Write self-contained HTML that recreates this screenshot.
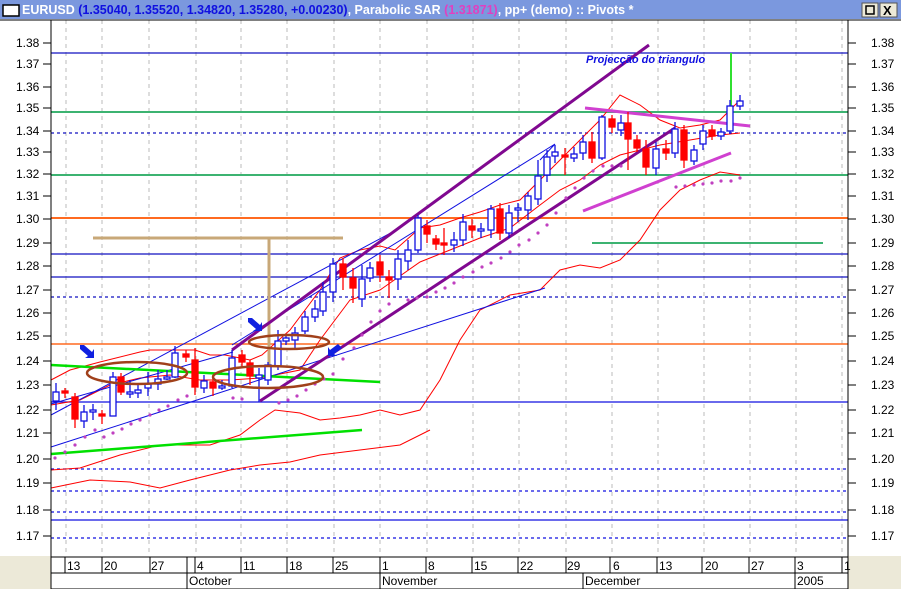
<!DOCTYPE html>
<html><head><meta charset="utf-8"><style>
html,body{margin:0;padding:0;background:#fff;}
svg{display:block;font-family:"Liberation Sans",sans-serif;}
</style></head><body>
<svg width="901" height="589" viewBox="0 0 901 589" xmlns="http://www.w3.org/2000/svg">
<rect x="0" y="0" width="901" height="589" fill="#fff"/>
<!-- title bar -->
<rect x="0" y="0" width="901" height="19" fill="#7b98de"/>
<rect x="3" y="5" width="16" height="11" fill="#fff" stroke="#000" stroke-width="1.5"/>
<text x="22" y="14" font-size="12.5" font-weight="bold" fill="#fff">EURUSD <tspan fill="#1010e0">(1.35040, 1.35520, 1.34820, 1.35280, +0.00230)</tspan>, Parabolic SAR <tspan fill="#e040c0">(1.31871)</tspan>, pp+ (demo) :: Pivots *</text>
<rect x="862" y="3" width="16" height="14" fill="#ece9d8" stroke="#555"/>
<rect x="866" y="6" width="8" height="8" fill="none" stroke="#000" stroke-width="1.5"/>
<rect x="880" y="3" width="17" height="14" fill="#ece9d8" stroke="#555"/>
<text x="883" y="15" font-size="13" font-weight="bold">X</text>
<!-- bottom grey corners -->
<rect x="0" y="556" width="51" height="33" fill="#ece9d8"/>
<rect x="848" y="556" width="53" height="33" fill="#ece9d8"/>
<!-- vertical grid -->
<g stroke="#bbb" stroke-dasharray="4,4" stroke-width="1">
<line x1="66" y1="20" x2="66" y2="556"/><line x1="102" y1="20" x2="102" y2="556"/><line x1="149" y1="20" x2="149" y2="556"/><line x1="196" y1="20" x2="196" y2="556"/><line x1="241" y1="20" x2="241" y2="556"/><line x1="287" y1="20" x2="287" y2="556"/><line x1="334" y1="20" x2="334" y2="556"/><line x1="380" y1="20" x2="380" y2="556"/><line x1="427" y1="20" x2="427" y2="556"/><line x1="473" y1="20" x2="473" y2="556"/><line x1="519" y1="20" x2="519" y2="556"/><line x1="566" y1="20" x2="566" y2="556"/><line x1="612" y1="20" x2="612" y2="556"/><line x1="658" y1="20" x2="658" y2="556"/><line x1="704" y1="20" x2="704" y2="556"/><line x1="750" y1="20" x2="750" y2="556"/><line x1="796" y1="20" x2="796" y2="556"/><line x1="842" y1="20" x2="842" y2="556"/>
</g>
<!-- horizontal lines -->
<g stroke-width="1.3">
<line x1="51" y1="53" x2="848" y2="53" stroke="#1010c0"/>
<line x1="51" y1="133" x2="848" y2="133" stroke="#1010c0" stroke-dasharray="3,3"/>
<line x1="51" y1="254" x2="848" y2="254" stroke="#1010c0"/>
<line x1="51" y1="277" x2="848" y2="277" stroke="#1010c0"/>
<line x1="51" y1="297" x2="848" y2="297" stroke="#1010c0" stroke-dasharray="3,3"/>
<line x1="51" y1="402" x2="848" y2="402" stroke="#1010e0"/>
<line x1="51" y1="469" x2="848" y2="469" stroke="#1010e0" stroke-dasharray="3,3"/>
<line x1="51" y1="491" x2="848" y2="491" stroke="#1010e0" stroke-dasharray="3,3"/>
<line x1="51" y1="512" x2="848" y2="512" stroke="#1010e0" stroke-dasharray="3,3"/>
<line x1="51" y1="520" x2="848" y2="520" stroke="#1010e0"/>
<line x1="51" y1="538" x2="848" y2="538" stroke="#1010e0" stroke-dasharray="3,3"/>
</g>
<line x1="51" y1="112" x2="848" y2="112" stroke="#3cb371" stroke-width="2"/>
<line x1="51" y1="175" x2="848" y2="175" stroke="#3cb371" stroke-width="2"/>
<line x1="51" y1="218" x2="848" y2="218" stroke="#ff6a20" stroke-width="2"/>
<line x1="51" y1="344" x2="848" y2="344" stroke="#ff6a20" stroke-width="1.5"/>
<line x1="592" y1="243" x2="823" y2="243" stroke="#3cb371" stroke-width="2"/>
<line x1="731" y1="53" x2="731" y2="123" stroke="#30e030" stroke-width="2"/>
<!-- bollinger -->
<g fill="none" stroke="#ff0000" stroke-width="1">
<polyline points="51,380 70,370 100,362 140,352 150,350 175,350 195,350 210,355 225,355 250,360 262,355 290,330 320,290 340,258 360,250 380,246 395,250 420,228 440,225 460,218 480,212 500,205 520,200 545,175 570,150 600,120 620,95 640,105 660,120 680,128 700,125 720,120 740,100"/>
<polyline points="51,405 80,400 110,385 140,378 170,375 200,380 230,380 260,378 300,370 320,340 350,300 380,290 420,262 450,250 480,238 510,228 540,205 560,190 580,180 600,165 620,155 640,150 660,145 690,140 720,135 740,133"/>
<polyline points="51,470 80,468 120,455 160,445 190,445 210,445 240,435 260,420 275,410 300,413 320,420 340,418 360,415 380,410 400,415 420,410 440,380 460,340 480,310 510,295 540,290 560,270 580,265 600,268 620,260 640,240 660,210 680,190 700,180 720,172 740,175"/>
<polyline points="51,488 90,480 130,482 160,488 190,480 230,470 260,465 290,462 320,455 360,450 400,445 430,430"/>
</g>
<!-- blue trend lines -->
<g fill="none" stroke="#1010e0" stroke-width="1">
<line x1="51" y1="415" x2="400" y2="228"/>
<line x1="51" y1="447" x2="545" y2="288"/>
<polyline points="232,345 555,144 540,160"/>
<line x1="51" y1="404" x2="233" y2="352"/>
</g>
<!-- green lines -->
<line x1="51" y1="365" x2="380" y2="382" stroke="#00e000" stroke-width="2.5"/>
<line x1="51" y1="454" x2="362" y2="430" stroke="#00e000" stroke-width="2.5"/>
<!-- tan -->
<line x1="93" y1="238" x2="343" y2="238" stroke="#c8a878" stroke-width="3"/>
<line x1="269" y1="238" x2="269" y2="378" stroke="#c8a878" stroke-width="3"/>
<!-- purple channel -->
<line x1="232" y1="350" x2="649" y2="45" stroke="#800890" stroke-width="3"/>
<line x1="260" y1="401" x2="675" y2="128" stroke="#800890" stroke-width="3"/>
<!-- magenta triangle -->
<line x1="585" y1="108" x2="750" y2="126" stroke="#d040d0" stroke-width="3"/>
<line x1="583" y1="211" x2="731" y2="153" stroke="#d040d0" stroke-width="3"/>
<!-- SAR dots -->
<g fill="#c040c0">
<circle cx="55" cy="458" r="1.6"/><circle cx="65" cy="452" r="1.6"/><circle cx="75" cy="445" r="1.6"/><circle cx="85" cy="437" r="1.6"/><circle cx="95" cy="430" r="1.6"/><circle cx="104" cy="437" r="1.6"/><circle cx="113" cy="433" r="1.6"/><circle cx="122" cy="429" r="1.6"/><circle cx="131" cy="424" r="1.6"/><circle cx="140" cy="420" r="1.6"/><circle cx="150" cy="415" r="1.6"/><circle cx="159" cy="410" r="1.6"/><circle cx="168" cy="406" r="1.6"/><circle cx="178" cy="400" r="1.6"/><circle cx="187" cy="396" r="1.6"/><circle cx="233" cy="398" r="1.6"/><circle cx="242" cy="399" r="1.6"/><circle cx="279" cy="403" r="1.6"/><circle cx="288" cy="400" r="1.6"/><circle cx="297" cy="396" r="1.6"/><circle cx="306" cy="390" r="1.6"/><circle cx="315" cy="384" r="1.6"/><circle cx="324" cy="379" r="1.6"/><circle cx="333" cy="374" r="1.6"/><circle cx="343" cy="359" r="1.6"/><circle cx="354" cy="348" r="1.6"/><circle cx="362" cy="335" r="1.6"/><circle cx="371" cy="322" r="1.6"/><circle cx="380" cy="311" r="1.6"/><circle cx="389" cy="304" r="1.6"/><circle cx="408" cy="300" r="1.6"/><circle cx="417" cy="298" r="1.6"/><circle cx="427" cy="297" r="1.6"/><circle cx="436" cy="292" r="1.6"/><circle cx="445" cy="288" r="1.6"/><circle cx="454" cy="283" r="1.6"/><circle cx="463" cy="277" r="1.6"/><circle cx="473" cy="272" r="1.6"/><circle cx="482" cy="267" r="1.6"/><circle cx="491" cy="263" r="1.6"/><circle cx="501" cy="258" r="1.6"/><circle cx="510" cy="252" r="1.6"/><circle cx="519" cy="245" r="1.6"/><circle cx="529" cy="240" r="1.6"/><circle cx="538" cy="233" r="1.6"/><circle cx="547" cy="225" r="1.6"/><circle cx="556" cy="213" r="1.6"/><circle cx="566" cy="198" r="1.6"/><circle cx="575" cy="188" r="1.6"/><circle cx="584" cy="178" r="1.6"/><circle cx="593" cy="171" r="1.6"/><circle cx="603" cy="166" r="1.6"/><circle cx="612" cy="166" r="1.6"/><circle cx="621" cy="166" r="1.6"/><circle cx="676" cy="187" r="1.6"/><circle cx="685" cy="186" r="1.6"/><circle cx="694" cy="185" r="1.6"/><circle cx="703" cy="184" r="1.6"/><circle cx="712" cy="183" r="1.6"/><circle cx="721" cy="181" r="1.6"/><circle cx="731" cy="181" r="1.6"/><circle cx="740" cy="178" r="1.6"/>
</g>
<!-- candles -->
<g stroke-width="1.3">
<g stroke="#1010e0" fill="#fff">
<line x1="56" y1="383" x2="56" y2="410"/><rect x="53" y="392" width="6" height="9"/>
<line x1="84" y1="405" x2="84" y2="428"/><rect x="81" y="412" width="6" height="9"/>
<line x1="93" y1="404" x2="93" y2="420"/><rect x="90" y="410" width="6" height="2"/>
<line x1="113" y1="372" x2="113" y2="416"/><rect x="110" y="377" width="6" height="39"/>
<line x1="130" y1="380" x2="130" y2="398"/><rect x="127" y="392" width="6" height="2"/>
<line x1="138" y1="383" x2="138" y2="398"/><rect x="135" y="390" width="6" height="3"/>
<line x1="148" y1="372" x2="148" y2="396"/><rect x="145" y="384" width="6" height="4"/>
<line x1="158" y1="370" x2="158" y2="390"/><rect x="155" y="379" width="6" height="5"/>
<line x1="167" y1="370" x2="167" y2="380"/><rect x="164" y="377" width="6" height="2"/>
<line x1="175" y1="346" x2="175" y2="378"/><rect x="172" y="353" width="6" height="24"/>
<line x1="204" y1="375" x2="204" y2="393"/><rect x="201" y="381" width="6" height="7"/>
<line x1="222" y1="380" x2="222" y2="390"/><rect x="219" y="386" width="6" height="2"/>
<line x1="232" y1="350" x2="232" y2="388"/><rect x="229" y="358" width="6" height="28"/>
<line x1="259" y1="368" x2="259" y2="402"/><rect x="256" y="375" width="6" height="3"/>
<line x1="268" y1="362" x2="268" y2="385"/><rect x="265" y="365" width="6" height="15"/>
<line x1="278" y1="330" x2="278" y2="370"/><rect x="275" y="341" width="6" height="25"/>
<line x1="286" y1="335" x2="286" y2="345"/><rect x="283" y="338" width="6" height="3"/>
<line x1="295" y1="327" x2="295" y2="348"/><rect x="292" y="333" width="6" height="7"/>
<line x1="305" y1="311" x2="305" y2="334"/><rect x="302" y="317" width="6" height="14"/>
<line x1="315" y1="300" x2="315" y2="322"/><rect x="312" y="309" width="6" height="8"/>
<line x1="323" y1="282" x2="323" y2="316"/><rect x="320" y="292" width="6" height="19"/>
<line x1="333" y1="258" x2="333" y2="302"/><rect x="330" y="264" width="6" height="28"/>
<line x1="362" y1="265" x2="362" y2="307"/><rect x="359" y="279" width="6" height="20"/>
<line x1="370" y1="262" x2="370" y2="282"/><rect x="367" y="268" width="6" height="10"/>
<line x1="398" y1="250" x2="398" y2="290"/><rect x="395" y="259" width="6" height="20"/>
<line x1="408" y1="240" x2="408" y2="270"/><rect x="405" y="250" width="6" height="11"/>
<line x1="418" y1="215" x2="418" y2="253"/><rect x="415" y="218" width="6" height="32"/>
<line x1="454" y1="232" x2="454" y2="252"/><rect x="451" y="240" width="6" height="5"/>
<line x1="463" y1="214" x2="463" y2="246"/><rect x="460" y="222" width="6" height="18"/>
<line x1="481" y1="223" x2="481" y2="238"/><rect x="478" y="229" width="6" height="2"/>
<line x1="491" y1="205" x2="491" y2="238"/><rect x="488" y="209" width="6" height="21"/>
<line x1="509" y1="205" x2="509" y2="238"/><rect x="506" y="213" width="6" height="20"/>
<line x1="518" y1="203" x2="518" y2="222"/><rect x="515" y="208" width="6" height="2"/>
<line x1="528" y1="192" x2="528" y2="220"/><rect x="525" y="196" width="6" height="14"/>
<line x1="538" y1="160" x2="538" y2="205"/><rect x="535" y="176" width="6" height="23"/>
<line x1="547" y1="150" x2="547" y2="182"/><rect x="544" y="157" width="6" height="18"/>
<line x1="555" y1="145" x2="555" y2="163"/><rect x="552" y="152" width="6" height="4"/>
<line x1="574" y1="147" x2="574" y2="162"/><rect x="571" y="154" width="6" height="4"/>
<line x1="583" y1="135" x2="583" y2="160"/><rect x="580" y="142" width="6" height="11"/>
<line x1="602" y1="115" x2="602" y2="160"/><rect x="599" y="117" width="6" height="41"/>
<line x1="621" y1="115" x2="621" y2="136"/><rect x="618" y="123" width="6" height="7"/>
<line x1="656" y1="142" x2="656" y2="175"/><rect x="653" y="149" width="6" height="19"/>
<line x1="675" y1="122" x2="675" y2="158"/><rect x="672" y="129" width="6" height="24"/>
<line x1="694" y1="145" x2="694" y2="165"/><rect x="691" y="150" width="6" height="11"/>
<line x1="703" y1="125" x2="703" y2="150"/><rect x="700" y="131" width="6" height="13"/>
<line x1="721" y1="128" x2="721" y2="140"/><rect x="718" y="132" width="6" height="4"/>
<line x1="730" y1="100" x2="730" y2="134"/><rect x="727" y="106" width="6" height="25"/>
<line x1="740" y1="95" x2="740" y2="110"/><rect x="737" y="101" width="6" height="5"/>
</g>
<g stroke="#ff0000" fill="#ff0000">
<line x1="65" y1="388" x2="65" y2="398"/><rect x="62" y="391" width="6" height="2"/>
<line x1="75" y1="393" x2="75" y2="428"/><rect x="72" y="397" width="6" height="22"/>
<line x1="102" y1="410" x2="102" y2="424"/><rect x="99" y="414" width="6" height="2"/>
<line x1="121" y1="373" x2="121" y2="395"/><rect x="118" y="377" width="6" height="15"/>
<line x1="186" y1="350" x2="186" y2="362"/><rect x="183" y="354" width="6" height="3"/>
<line x1="195" y1="348" x2="195" y2="395"/><rect x="192" y="360" width="6" height="27"/>
<line x1="213" y1="375" x2="213" y2="396"/><rect x="210" y="382" width="6" height="6"/>
<line x1="242" y1="350" x2="242" y2="368"/><rect x="239" y="355" width="6" height="7"/>
<line x1="250" y1="360" x2="250" y2="385"/><rect x="247" y="363" width="6" height="13"/>
<line x1="343" y1="258" x2="343" y2="290"/><rect x="340" y="264" width="6" height="13"/>
<line x1="353" y1="268" x2="353" y2="303"/><rect x="350" y="278" width="6" height="10"/>
<line x1="380" y1="255" x2="380" y2="282"/><rect x="377" y="262" width="6" height="13"/>
<line x1="389" y1="270" x2="389" y2="298"/><rect x="386" y="277" width="6" height="3"/>
<line x1="427" y1="220" x2="427" y2="243"/><rect x="424" y="226" width="6" height="8"/>
<line x1="436" y1="235" x2="436" y2="250"/><rect x="433" y="239" width="6" height="5"/>
<line x1="444" y1="228" x2="444" y2="255"/><rect x="441" y="243" width="6" height="2"/>
<line x1="472" y1="219" x2="472" y2="238"/><rect x="469" y="226" width="6" height="4"/>
<line x1="500" y1="203" x2="500" y2="240"/><rect x="497" y="209" width="6" height="24"/>
<line x1="565" y1="148" x2="565" y2="175"/><rect x="562" y="155" width="6" height="2"/>
<line x1="592" y1="132" x2="592" y2="163"/><rect x="589" y="142" width="6" height="16"/>
<line x1="612" y1="115" x2="612" y2="133"/><rect x="609" y="119" width="6" height="8"/>
<line x1="628" y1="112" x2="628" y2="170"/><rect x="625" y="123" width="6" height="16"/>
<line x1="637" y1="135" x2="637" y2="152"/><rect x="634" y="140" width="6" height="8"/>
<line x1="646" y1="140" x2="646" y2="175"/><rect x="643" y="149" width="6" height="18"/>
<line x1="666" y1="140" x2="666" y2="160"/><rect x="663" y="149" width="6" height="4"/>
<line x1="684" y1="125" x2="684" y2="168"/><rect x="681" y="130" width="6" height="30"/>
<line x1="712" y1="125" x2="712" y2="140"/><rect x="709" y="130" width="6" height="6"/>
</g>
</g>
<!-- ellipses -->
<g fill="none" stroke="#a0401a" stroke-width="2.5">
<ellipse cx="137" cy="373" rx="50" ry="11"/>
<ellipse cx="268" cy="377" rx="55" ry="11"/>
<ellipse cx="289" cy="342" rx="40" ry="7"/>
</g>
<!-- arrows -->
<g fill="#1020e0">
<polygon points="80,345 84,345 92,352 94,349 94,358 85,358 88,356 80,349"/>
<polygon points="248,318 252,318 260,325 262,322 262,331 253,331 256,329 248,322"/>
<polygon points="338,344 342,348 334,354 337,356 328,356 328,347 330,350"/>
</g>
<text x="586" y="63" font-size="11" font-weight="bold" font-style="italic" fill="#1010e0">Projecção do triangulo</text>
<!-- axes -->
<line x1="51" y1="20" x2="51" y2="557" stroke="#000"/>
<line x1="848" y1="20" x2="848" y2="557" stroke="#000"/>
<line x1="0" y1="20" x2="901" y2="20" stroke="#000"/>
<g font-size="12" fill="#000" stroke="#000">
<g stroke-width="1">
<line x1="43" y1="43" x2="51" y2="43"/><line x1="43" y1="64" x2="51" y2="64"/><line x1="43" y1="87" x2="51" y2="87"/><line x1="43" y1="108" x2="51" y2="108"/><line x1="43" y1="131" x2="51" y2="131"/><line x1="43" y1="152" x2="51" y2="152"/><line x1="43" y1="174" x2="51" y2="174"/><line x1="43" y1="196" x2="51" y2="196"/><line x1="43" y1="219" x2="51" y2="219"/><line x1="43" y1="243" x2="51" y2="243"/><line x1="43" y1="266" x2="51" y2="266"/><line x1="43" y1="290" x2="51" y2="290"/><line x1="43" y1="313" x2="51" y2="313"/><line x1="43" y1="336" x2="51" y2="336"/><line x1="43" y1="361" x2="51" y2="361"/><line x1="43" y1="385" x2="51" y2="385"/><line x1="43" y1="410" x2="51" y2="410"/><line x1="43" y1="433" x2="51" y2="433"/><line x1="43" y1="459" x2="51" y2="459"/><line x1="43" y1="483" x2="51" y2="483"/><line x1="43" y1="510" x2="51" y2="510"/><line x1="43" y1="536" x2="51" y2="536"/>
<line x1="848" y1="43" x2="856" y2="43"/><line x1="848" y1="64" x2="856" y2="64"/><line x1="848" y1="87" x2="856" y2="87"/><line x1="848" y1="108" x2="856" y2="108"/><line x1="848" y1="131" x2="856" y2="131"/><line x1="848" y1="152" x2="856" y2="152"/><line x1="848" y1="174" x2="856" y2="174"/><line x1="848" y1="196" x2="856" y2="196"/><line x1="848" y1="219" x2="856" y2="219"/><line x1="848" y1="243" x2="856" y2="243"/><line x1="848" y1="266" x2="856" y2="266"/><line x1="848" y1="290" x2="856" y2="290"/><line x1="848" y1="313" x2="856" y2="313"/><line x1="848" y1="336" x2="856" y2="336"/><line x1="848" y1="361" x2="856" y2="361"/><line x1="848" y1="385" x2="856" y2="385"/><line x1="848" y1="410" x2="856" y2="410"/><line x1="848" y1="433" x2="856" y2="433"/><line x1="848" y1="459" x2="856" y2="459"/><line x1="848" y1="483" x2="856" y2="483"/><line x1="848" y1="510" x2="856" y2="510"/><line x1="848" y1="536" x2="856" y2="536"/>
</g>
<g stroke="none">
<text x="16" y="47">1.38</text><text x="16" y="68">1.37</text><text x="16" y="91">1.36</text><text x="16" y="112">1.35</text><text x="16" y="135">1.34</text><text x="16" y="156">1.33</text><text x="16" y="178">1.32</text><text x="16" y="200">1.31</text><text x="16" y="223">1.30</text><text x="16" y="247">1.29</text><text x="16" y="270">1.28</text><text x="16" y="294">1.27</text><text x="16" y="317">1.26</text><text x="16" y="340">1.25</text><text x="16" y="365">1.24</text><text x="16" y="389">1.23</text><text x="16" y="414">1.22</text><text x="16" y="437">1.21</text><text x="16" y="463">1.20</text><text x="16" y="487">1.19</text><text x="16" y="514">1.18</text><text x="16" y="540">1.17</text>
<text x="871" y="47">1.38</text><text x="871" y="68">1.37</text><text x="871" y="91">1.36</text><text x="871" y="112">1.35</text><text x="871" y="135">1.34</text><text x="871" y="156">1.33</text><text x="871" y="178">1.32</text><text x="871" y="200">1.31</text><text x="871" y="223">1.30</text><text x="871" y="247">1.29</text><text x="871" y="270">1.28</text><text x="871" y="294">1.27</text><text x="871" y="317">1.26</text><text x="871" y="340">1.25</text><text x="871" y="365">1.24</text><text x="871" y="389">1.23</text><text x="871" y="414">1.22</text><text x="871" y="437">1.21</text><text x="871" y="463">1.20</text><text x="871" y="487">1.19</text><text x="871" y="514">1.18</text><text x="871" y="540">1.17</text>
</g>
</g>
<!-- date axis -->
<rect x="51" y="557" width="797" height="32" fill="#fff" stroke="#000"/>
<line x1="51" y1="573" x2="848" y2="573" stroke="#000"/>
<g stroke="#000">
<line x1="65" y1="557" x2="65" y2="573"/><line x1="102" y1="557" x2="102" y2="573"/><line x1="150" y1="557" x2="150" y2="573"/><line x1="187" y1="557" x2="187" y2="589"/><line x1="195" y1="557" x2="195" y2="573"/><line x1="241" y1="557" x2="241" y2="573"/><line x1="287" y1="557" x2="287" y2="573"/><line x1="333" y1="557" x2="333" y2="573"/><line x1="380" y1="557" x2="380" y2="589"/><line x1="426" y1="557" x2="426" y2="573"/><line x1="472" y1="557" x2="472" y2="573"/><line x1="518" y1="557" x2="518" y2="573"/><line x1="566" y1="557" x2="566" y2="573"/><line x1="583" y1="573" x2="583" y2="589"/><line x1="610" y1="557" x2="610" y2="573"/><line x1="657" y1="557" x2="657" y2="573"/><line x1="702" y1="557" x2="702" y2="573"/><line x1="749" y1="557" x2="749" y2="573"/><line x1="795" y1="557" x2="795" y2="589"/><line x1="842" y1="557" x2="842" y2="573"/>
</g>
<g font-size="12" fill="#000">
<text x="67" y="570">13</text><text x="104" y="570">20</text><text x="151" y="570">27</text><text x="197" y="570">4</text><text x="243" y="570">11</text><text x="289" y="570">18</text><text x="335" y="570">25</text><text x="382" y="570">1</text><text x="428" y="570">8</text><text x="474" y="570">15</text><text x="520" y="570">22</text><text x="567" y="570">29</text><text x="613" y="570">6</text><text x="659" y="570">13</text><text x="705" y="570">20</text><text x="751" y="570">27</text><text x="797" y="570">3</text><text x="844" y="570">1</text>
<text x="189" y="585">October</text><text x="382" y="585">November</text><text x="585" y="585">December</text><text x="797" y="585">2005</text>
</g>
</svg>
</body></html>
